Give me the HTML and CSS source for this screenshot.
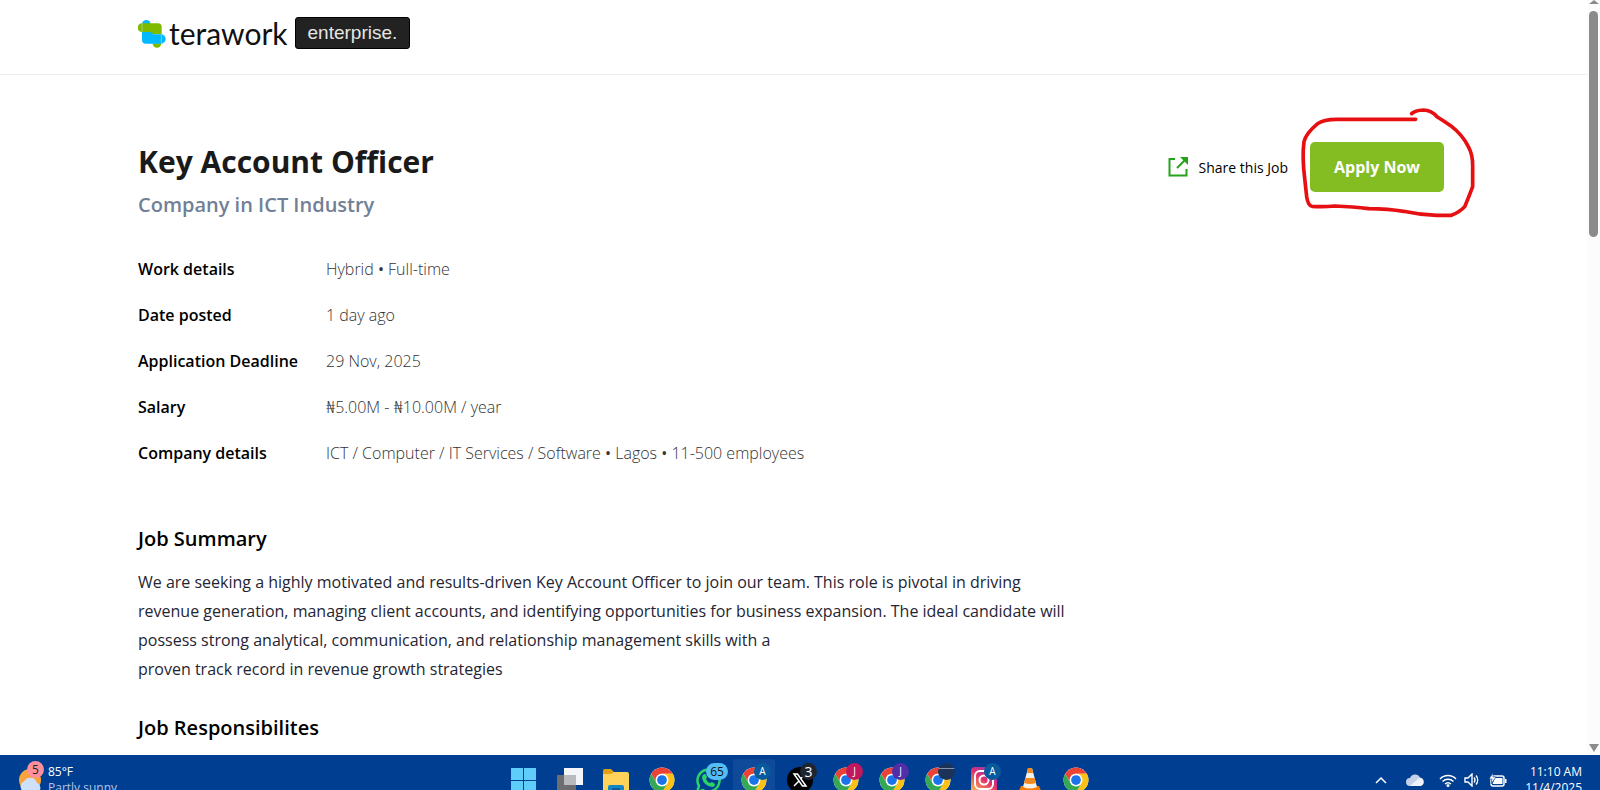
FILE: index.html
```html
<!DOCTYPE html>
<html lang="en">
  <head>
    <meta charset="UTF-8" />
    <meta name="viewport" content="width=device-width, initial-scale=1.0" />
    <title>Key Account Officer - Terawork Enterprise</title>
    <link rel="stylesheet" href="styles.css">
  </head>
  <body>
    <!-- shared icons -->
    <svg class="defs" aria-hidden="true">
      <symbol id="chrome" viewBox="0 0 48 48">
        <circle cx="24" cy="24" r="23" fill="#fff" />
        <path d="M4.1 12.5a23 23 0 0 1 39.8 0H24a11.500 11.500 0 0 0-10 17.200z" fill="#ea4335" />
        <path d="M43.900 12.500A23 23 0 0 1 24 47l10-17.200a11.500 11.500 0 0 0-10-17.300z" fill="#fbc116" />
        <path d="M24 47A23 23 0 0 1 4.100 12.500l9.900 17.300a11.500 11.500 0 0 0 20 0z" fill="#34a853" />
        <circle cx="24" cy="24" r="11.500" fill="#fff" />
        <circle cx="24" cy="24" r="9" fill="#1a73e8" />
      </symbol>
    </svg>

    <div class="window">
      <div class="page">
        <header class="header">
          <div class="container brand">
            <svg class="brand-mark" viewBox="54 54 84 87">
              <path d="M66 70a13 13 0 0 1 26 0z" fill="#00b9ff" />
              <path d="M98 127a13 13 0 0 0 26 0z" fill="#7fba00" />
              <path d="M66 67h48q11 0 11 11v22H76q-10 0-10-7a13 13 0 0 1 0-26z" fill="#7fba00" />
              <path d="M66 93h25q6 0 8 7h24a14 14 0 0 1 0 28H78q-12 0-12-12z" fill="#00b9ff" />
              <path d="M66 67v26M124 101v26" stroke="#a8e0c8" stroke-width="2" />
            </svg>
            <span class="brand-name">terawork</span>
            <span class="brand-tag">enterprise.</span>
          </div>
        </header>

        <main class="container main">
          <div class="top">
            <div>
              <h1>Key Account Officer</h1>
              <p class="company">Company in ICT Industry</p>
            </div>
            <div class="actions">
              <button class="share">
                <svg viewBox="0 0 20 20">
                  <path d="M7 2H1.500v16.500h17V12" fill="none" stroke="#27a319" stroke-width="2" />
                  <path d="M9 11l8-8" stroke="#27a319" stroke-width="2" />
                  <path d="M12 0h8v8z" fill="#27a319" />
                </svg>
                Share this Job
              </button>
              <div class="apply-wrap">
                <button class="apply">Apply Now</button>
                <svg class="marker" viewBox="438 42 546 336">
                  <path d="M797 88H560Q520 88 503 101Q468 130 462 155Q456 200 464 265L470 320Q474 346 486 349Q520 351 554 348Q610 350 656 356Q715 357 761 364Q810 375 860 376H904Q930 366 944 350Q955 325 968 290V230Q969 195 955 170Q938 135 902 107Q880 92 862 81Q845 61 820 60Q795 61 785 71" />
                </svg>
              </div>
            </div>
          </div>

          <dl class="details">
            <dt>Work details</dt>
            <dd>Hybrid <b>•</b> Full-time</dd>
            <dt>Date posted</dt>
            <dd>1 day ago</dd>
            <dt>Application Deadline</dt>
            <dd>29 Nov, 2025</dd>
            <dt>Salary</dt>
            <dd>₦5.00M - ₦10.00M / year</dd>
            <dt>Company details</dt>
            <dd>ICT / Computer / IT Services / Software <b>•</b> Lagos <b>•</b> 11-500 employees</dd>
          </dl>

          <section class="block">
            <h2>Job Summary</h2>
            <p>
              We are seeking a highly motivated and results-driven Key Account Officer to join our team. This role is pivotal in driving<br />
              revenue generation, managing client accounts, and identifying opportunities for business expansion. The ideal candidate will<br />
              possess strong analytical, communication, and relationship management skills with a<br />
              proven track record in revenue growth strategies
            </p>
          </section>
          <section class="block">
            <h2>Job Responsibilites</h2>
          </section>
        </main>
      </div>

      <div class="scrollbar">
        <span class="arrow-up"></span>
        <span class="thumb"></span>
        <span class="arrow-down"></span>
      </div>
    </div>

    <footer class="taskbar">
      <div class="weather">
        <div class="weather-icon">
          <svg viewBox="0 0 24 26">
            <circle cx="12" cy="13" r="11" fill="#f9a43a" />
            <path d="M7 25a5.500 5.500 0 0 1-1-10.500 7 7 0 0 1 13 1.500 5 5 0 0 1 1 9z" fill="#cfe0fa" />
          </svg>
          <span class="badge pink">5</span>
        </div>
        <div class="weather-text">
          <span>85°F</span>
          <span class="dim">Partly sunny</span>
        </div>
      </div>

      <nav class="apps">
        <button class="app" aria-label="Start">
          <svg viewBox="0 0 26 26"><path d="M0 1h12v12H0zM13 1h12v12H13zM0 14h12v12H0zM13 14h12v12H13z" fill="#5fcdf9" /></svg>
        </button>
        <button class="app" aria-label="Task view">
          <svg viewBox="0 0 26 26"><path d="M7 1h19v17H7z" fill="#f3f5f9" /><path d="M0 8h19v16H0z" fill="#6d6d70" /><path d="M7 8h12v10H7z" fill="#b9babd" /></svg>
        </button>
        <button class="app" aria-label="Files">
          <svg viewBox="0 0 26 26"><path d="M0 4q0-2 2-2h6l3 3h13v6H0z" fill="#e0a012" /><path d="M0 7h8l3-2h13q2 0 2 2v19H0z" fill="#ffd35a" /><path d="M5 26v-6q0-2 2-2h12q2 0 2 2v6z" fill="#1385c9" /><path d="M9 21h8v2H9z" fill="#0b5c97" /></svg>
        </button>
        <button class="app" aria-label="Chrome"><svg><use href="#chrome" /></svg></button>
        <button class="app" aria-label="WhatsApp">
          <svg viewBox="0 0 26 26"><path d="M2 25l2-6a11 11 0 1 1 4 4z" fill="none" stroke="#2bd366" stroke-width="2.500" /><path d="M8 8q2-2 3 0l1 2-1 2q1 3 4 4l2-1 3 2q0 3-3 3Q9 19 7 11q0-2 1-3z" fill="#2bd366" /></svg>
          <span class="badge wide">65</span>
        </button>
        <button class="app active" aria-label="Chrome, profile A"><svg><use href="#chrome" /></svg><span class="badge blue">A</span></button>
        <button class="app" aria-label="X">
          <svg viewBox="0 0 26 26"><circle cx="13" cy="13" r="13" fill="#000" /><path d="M7 7h3.500l8.500 12h-3.500z" fill="none" stroke="#fff" stroke-width="1.500" /><path d="M18.500 7l-5 5M12 14l-5 5" stroke="#fff" stroke-width="1.500" /></svg>
          <span class="badge dark">3</span>
        </button>
        <button class="app" aria-label="Chrome, profile J"><svg><use href="#chrome" /></svg><span class="badge red">J</span></button>
        <button class="app" aria-label="Chrome, second profile J"><svg><use href="#chrome" /></svg><span class="badge purple">J</span></button>
        <button class="app" aria-label="Chrome, work profile"><svg><use href="#chrome" /></svg><span class="badge navy"></span></button>
        <button class="app" aria-label="Instagram">
          <svg viewBox="0 0 26 26">
            <linearGradient id="insta" x1="0.900" y1="0" x2="0.200" y2="1"><stop offset="0" stop-color="#7a3fd0" /><stop offset="0.500" stop-color="#e1306c" /><stop offset="1" stop-color="#fdb24a" /></linearGradient>
            <rect width="26" height="26" rx="4" fill="url(#insta)" />
            <g fill="none" stroke="#fff" stroke-width="2"><rect x="4" y="4" width="18" height="18" rx="5" /><circle cx="13" cy="13" r="4.500" /></g>
            <circle cx="18" cy="8" r="1" fill="#fff" />
          </svg>
          <span class="badge blue">A</span>
        </button>
        <button class="app" aria-label="VLC">
          <svg viewBox="0 0 26 26"><path d="M4 19h18l3 7H1z" fill="#f57c00" /><path d="M11 1h4l5 19q-7 3-14 0z" fill="#f4f0ea" /><path d="M11 1h4l1 5h-6zM8.500 11h9l1.500 5q-6 2-12 0z" fill="#f58a1c" /></svg>
        </button>
        <button class="app" aria-label="Chrome, guest"><svg><use href="#chrome" /></svg></button>
      </nav>

      <div class="tray">
        <svg class="chevron" viewBox="0 0 12 8"><path d="M1 7l5-5 5 5" fill="none" stroke="#fff" stroke-width="1.500" /></svg>
        <svg class="cloud" viewBox="0 0 18 12"><path d="M4 12a4 4 0 0 1 0-8 5.500 5.500 0 0 1 10-.5A4.300 4.300 0 0 1 14 12z" fill="#c3d2ea" /><path d="M4 12L13 4a4 4 0 0 1 1 8z" fill="#eef3fb" /></svg>
        <svg class="wifi" viewBox="0 0 18 13"><g fill="none" stroke="#fff" stroke-width="1.400"><path d="M1 5a11 11 0 0 1 16 0M3.500 7.500a8 8 0 0 1 11 0M6 10a4.500 4.500 0 0 1 6 0" /></g><circle cx="9" cy="11.500" r="1.500" fill="#fff" /></svg>
        <svg class="sound" viewBox="0 0 16 14"><g fill="none" stroke="#fff" stroke-width="1.400"><path d="M1 5h3l4-4v12L4 9H1zM10 4.500a4 4 0 0 1 0 5M12 2.500a7 7 0 0 1 0 9" /></g></svg>
        <svg class="battery" viewBox="0 0 18 14"><rect x="2" y="3" width="13" height="10" rx="2" fill="none" stroke="#fff" stroke-width="1.500" /><path d="M6 5h7.500v6h-10z" fill="#fff" /><path d="M16 6h1.500v4H16z" fill="#fff" /><path d="M4 0L0 6h3L2 11l5-7H4z" fill="#fff" stroke="#003e92" stroke-width="0.600" /></svg>
        <div class="clock">
          <span>11:10 AM</span>
          <span>11/4/2025</span>
        </div>
      </div>
    </footer>
  </body>
</html>
```
FILE: styles.css
```css
* {
  box-sizing: border-box;
}
body {
  margin: 0;
  height: 100vh;
  display: flex;
  flex-direction: column;
  overflow: hidden;
  background: #fff;
  color: #000;
  font-family: "Open Sans", "Noto Sans", sans-serif;
  font-size: 16px;
}
button {
  border: none;
  padding: 0;
  background: none;
  font-family: inherit;
  cursor: pointer;
}
h1,
h2,
p,
dl,
dd {
  margin: 0;
}
.defs {
  display: none;
}

/* browser window */
.window {
  flex: 1;
  min-height: 0;
  display: flex;
}
.page {
  flex: 1;
  overflow: hidden;
}
.container {
  width: 100%;
  max-width: 1590px;
  margin: 0 auto;
  padding: 0 143px 0 138px;
}
.scrollbar {
  width: 13px;
  background: #fcfcfc;
  display: flex;
  flex-direction: column;
  align-items: center;
  padding-bottom: 3px;
}
.arrow-up,
.arrow-down {
  border: 5px solid transparent;
}
.arrow-up {
  height: 4px;
  border-top: none;
  border-bottom: 4px solid #8b8b8b;
}
.arrow-down {
  margin-top: auto;
  border-bottom: none;
  border-top: 8px solid #8b8b8b;
}
.thumb {
  width: 9px;
  height: 30%;
  margin-top: 7px;
  border-radius: 5px;
  background: #8b8b8b;
}

/* header */
.header {
  height: 75px;
  padding-top: 17px;
  border-bottom: 1px solid #ebecf2;
}
.brand {
  display: flex;
  align-items: center;
}
.brand-mark {
  width: 28px;
  height: 29px;
}
.brand-name {
  margin: 0 7px 0 3px;
  font-family: Lato, sans-serif;
  font-size: 30px;
  line-height: 30px;
  color: #111;
}
.brand-tag {
  padding: 0 12px;
  border: 1px solid #000;
  border-radius: 3px;
  background: #222;
  color: #e6e6e6;
  font-family: "Liberation Sans", Arial, sans-serif;
  font-size: 19px;
  line-height: 30px;
}

/* job */
.main {
  padding-top: 66px;
}
.top {
  display: flex;
  justify-content: space-between;
}
h1 {
  font-size: 30px;
  line-height: 42px;
  color: #1a1a1a;
}
.company {
  margin-top: 7px;
  font-size: 20px;
  font-weight: 600;
  line-height: 30px;
  color: #718096;
}
.actions {
  display: flex;
  align-items: flex-start;
  gap: 22px;
  padding-top: 1px;
}
.share {
  height: 50px;
  display: flex;
  align-items: center;
  gap: 11px;
  font-size: 14px;
  font-weight: 500;
  color: #000;
}
.share svg {
  width: 20px;
  height: 20px;
}
.apply-wrap {
  position: relative;
}
.apply {
  width: 134px;
  height: 50px;
  border-radius: 5px;
  background: #84bd22;
  color: #fff;
  font-size: 16px;
  font-weight: 700;
}
.marker {
  position: absolute;
  left: -14px;
  top: -38px;
  width: 182px;
  height: 112px;
  overflow: visible;
  pointer-events: none;
}
.marker path {
  fill: none;
  stroke: #e60f12;
  stroke-width: 11;
  stroke-linecap: round;
  stroke-linejoin: round;
}
.details {
  display: grid;
  grid-template-columns: 188px 1fr;
  row-gap: 22px;
  margin-top: 37px;
  font-size: 16px;
  line-height: 24px;
}
.details dt {
  font-weight: 600;
}
.details dd {
  font-weight: 300;
  color: #333;
}
.details b {
  font-weight: 400;
}
.block {
  margin-top: 59px;
}
.block + .block {
  margin-top: 29px;
}
h2 {
  font-size: 20px;
  font-weight: 600;
  line-height: 30px;
}
.block p {
  margin-top: 14px;
  font-size: 16px;
  line-height: 29px;
  color: #1f2533;
  white-space: nowrap;
}

/* taskbar */
.taskbar {
  height: 35px;
  flex: none;
  display: grid;
  grid-template-columns: 1fr auto 1fr;
  grid-template-rows: 50px;
  overflow: hidden;
  background: #003e92;
  color: #fff;
  font-size: 12px;
  line-height: 16px;
}
.weather {
  display: flex;
  align-items: center;
  gap: 6px;
  padding-left: 18px;
}
.weather-icon {
  position: relative;
  width: 24px;
  height: 26px;
}
.weather-text {
  display: flex;
  flex-direction: column;
}
.dim {
  color: #b3c5e2;
}
.badge {
  position: absolute;
  left: 23px;
  top: 8px;
  width: 17px;
  height: 17px;
  border-radius: 50%;
  color: #fff;
  font-size: 10px;
  line-height: 17px;
  text-align: center;
}
.pink {
  left: 9px;
  top: -6px;
  background: #ff8f9c;
  color: #222;
  font-size: 12px;
}
.wide {
  left: 21px;
  width: 22px;
  border-radius: 9px;
  background: #55bdf5;
  color: #111;
  font-size: 12px;
}
.blue {
  background: #075a9c;
}
.dark {
  background: #20242e;
  font-size: 14px;
}
.red {
  background: #c2185b;
}
.purple {
  background: #512da8;
}
.navy {
  background: linear-gradient(#1c3359 5px, #8392aa 5px 6px, #1c3359 6px);
}
.apps {
  display: flex;
}
.app {
  position: relative;
  width: 46px;
  height: 50px;
  display: flex;
  align-items: center;
  justify-content: center;
}
.app svg {
  width: 26px;
  height: 26px;
}
.active {
  border-radius: 5px;
  background: #0f4a9a;
  background-clip: content-box;
  padding: 4px 2px;
}
.tray {
  display: flex;
  align-items: center;
  justify-content: flex-end;
  padding-right: 18px;
}
.chevron {
  width: 12px;
  height: 8px;
  margin-right: 19px;
}
.cloud {
  width: 18px;
  height: 12px;
  margin-right: 15px;
}
.wifi {
  width: 18px;
  height: 13px;
  margin-right: 7px;
}
.sound {
  width: 16px;
  height: 14px;
  margin-right: 9px;
}
.battery {
  width: 18px;
  height: 14px;
}
.clock {
  width: 75px;
  display: flex;
  flex-direction: column;
  text-align: right;
}
```
